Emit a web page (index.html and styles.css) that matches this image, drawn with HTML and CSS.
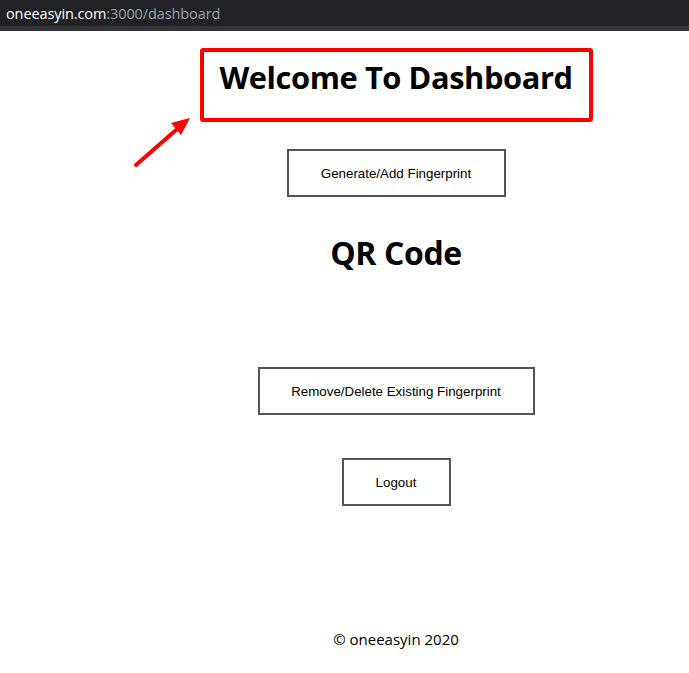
FILE: index.html
```html
<!DOCTYPE html>
<html>
<head>
<meta charset="utf-8">
<link rel="stylesheet" href="styles.css">
</head>
<body>
<div class="urlbar">
  <div class="url"><span class="host">oneeasyin.com</span><span class="path">:3000/dashboard</span></div>
</div>
<div class="strip"></div>
<div class="viewport">
  <main class="page">
    <div class="title-box">
      <h1 class="title">Welcome To Dashboard</h1>
    </div>
    <button class="btn btn-generate">Generate/Add Fingerprint</button>
    <h2 class="qr">QR Code</h2>
    <div class="qr-space"></div>
    <button class="btn btn-remove">Remove/Delete Existing Fingerprint</button>
    <button class="btn btn-logout">Logout</button>
    <footer class="footer">© oneeasyin 2020</footer>
  </main>
  <svg class="arrow" width="70" height="60" viewBox="0 0 70 60">
    <line x1="6" y1="53" x2="46" y2="18" stroke="#ff0000" stroke-width="4" stroke-linecap="round"/>
    <polygon points="60,6 41,11 51,23" fill="#ff0000"/>
  </svg>
</div>
</body>
</html>
```
FILE: styles.css
```css
html, body {
  margin: 0;
  padding: 0;
  background: #ffffff;
}
body {
  font-family: "Open Sans", "Noto Sans", sans-serif;
  color: #000;
}
.urlbar {
  height: 26px;
  background: #202124;
  display: flex;
  align-items: center;
  padding-left: 6px;
}
.url {
  font-family: "Open Sans", sans-serif;
  font-size: 14.5px;
  letter-spacing: -0.1px;
}
.host { color: #ffffff; }
.path { color: #9aa0a6; }
.strip {
  height: 5px;
  background: #35363a;
}
.viewport {
  position: relative;
  overflow: hidden;
  width: 689px;
  height: 642px;
}
.page {
  width: 792px;
  display: flex;
  flex-direction: column;
  align-items: center;
}
.title-box {
  margin-top: 17px;
  width: 385px;
  height: 66px;
  border: 4px solid #ff0000;
  border-radius: 3px;
  display: flex;
  justify-content: center;
}
.title {
  margin: 5px 0 0 0;
  font-size: 30.8px;
  font-weight: 700;
  line-height: 40px;
  letter-spacing: -0.4px;
}
.btn {
  font-family: "Liberation Sans", Arial, sans-serif;
  font-size: 13.33px;
  background: #ffffff;
  color: #000;
  border: 2px solid #555555;
  height: 48px;
  padding: 0;
  white-space: nowrap;
}
.btn-generate {
  margin-top: 27px;
  width: 219px;
}
.qr {
  margin: 36px 0 0 0;
  font-size: 32px;
  font-weight: 700;
  line-height: 40px;
  letter-spacing: -0.4px;
}
.qr-space {
  height: 94px;
}
.btn-remove {
  width: 277px;
}
.btn-logout {
  margin-top: 43px;
  width: 109px;
}
.footer {
  margin-top: 123px;
  font-size: 15px;
  line-height: 20px;
}
.arrow {
  position: absolute;
  left: 130px;
  top: 81px;
}
```
